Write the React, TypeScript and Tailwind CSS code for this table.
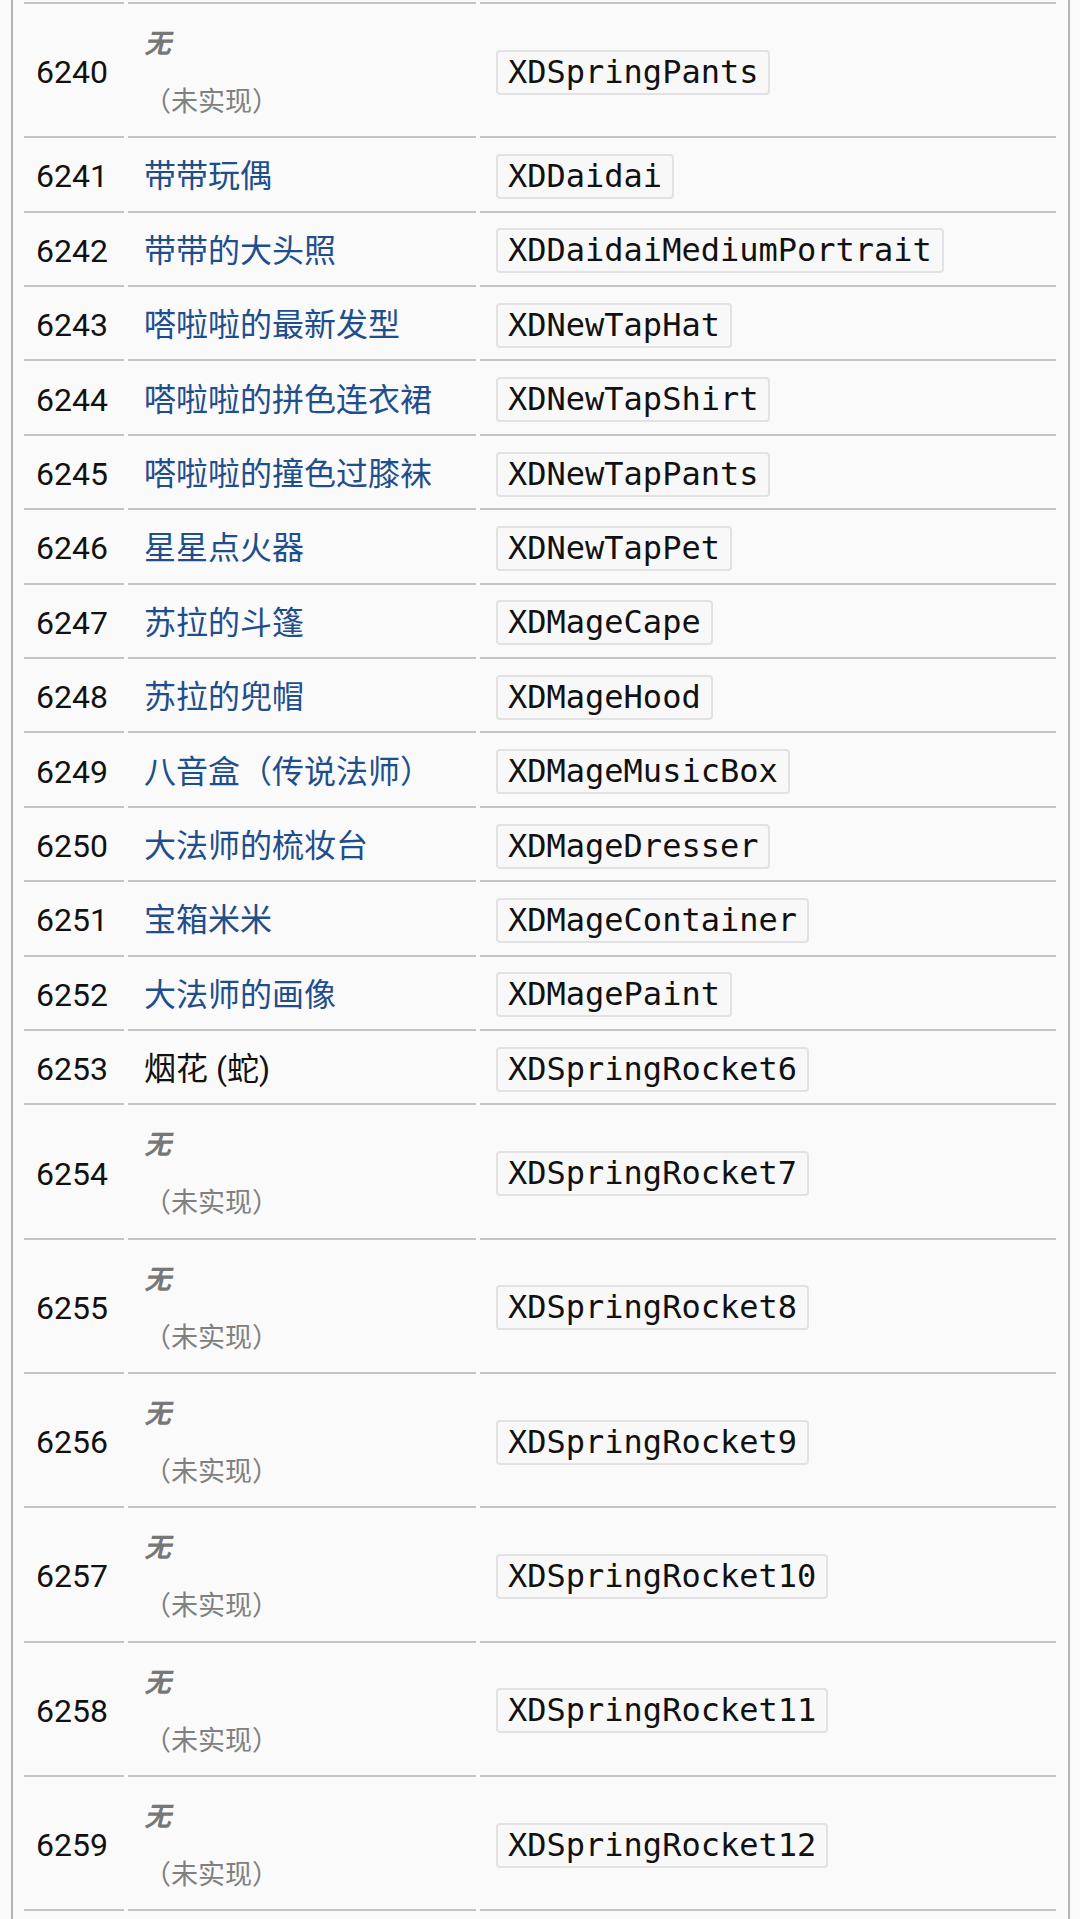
type Row = {
  id: number;
  name?: string;
  link?: boolean;
  code: string;
};

const rows: Row[] = [
  { id: 6240, code: "XDSpringPants" },
  { id: 6241, name: "带带玩偶", link: true, code: "XDDaidai" },
  { id: 6242, name: "带带的大头照", link: true, code: "XDDaidaiMediumPortrait" },
  { id: 6243, name: "嗒啦啦的最新发型", link: true, code: "XDNewTapHat" },
  { id: 6244, name: "嗒啦啦的拼色连衣裙", link: true, code: "XDNewTapShirt" },
  { id: 6245, name: "嗒啦啦的撞色过膝袜", link: true, code: "XDNewTapPants" },
  { id: 6246, name: "星星点火器", link: true, code: "XDNewTapPet" },
  { id: 6247, name: "苏拉的斗篷", link: true, code: "XDMageCape" },
  { id: 6248, name: "苏拉的兜帽", link: true, code: "XDMageHood" },
  { id: 6249, name: "八音盒（传说法师）", link: true, code: "XDMageMusicBox" },
  { id: 6250, name: "大法师的梳妆台", link: true, code: "XDMageDresser" },
  { id: 6251, name: "宝箱米米", link: true, code: "XDMageContainer" },
  { id: 6252, name: "大法师的画像", link: true, code: "XDMagePaint" },
  { id: 6253, name: "烟花 (蛇)", code: "XDSpringRocket6" },
  { id: 6254, code: "XDSpringRocket7" },
  { id: 6255, code: "XDSpringRocket8" },
  { id: 6256, code: "XDSpringRocket9" },
  { id: 6257, code: "XDSpringRocket10" },
  { id: 6258, code: "XDSpringRocket11" },
  { id: 6259, code: "XDSpringRocket12" },
];

const cell = "border-b-2 border-[#c4c4c4] flex items-center";

const Missing = () => (
  <div className="flex flex-col self-stretch pt-[14px] gap-[18px]">
    <i className="text-[27px] leading-[40px] font-bold text-[#777777] [font-family:'Noto_Sans_CJK_SC',sans-serif]">
      无
    </i>
    <span className="text-[27px] leading-[40px] text-[#808080] [font-family:'Noto_Sans_CJK_SC',sans-serif]">
      （未实现）
    </span>
  </div>
);

const TableRow = ({ row }: { row: Row }) => {
  const tall = !row.name;
  const h = tall ? "h-[130.3px]" : "h-[70.4px]";
  return (
    <div className="grid grid-cols-[100px_348px_576px] gap-x-[4px] pt-[4px]">
      <div className={`${cell} ${h} pl-[12px]`}>
        <span className="text-[32px] text-[#111] [font-family:Roboto,sans-serif]">
          {row.id}
        </span>
      </div>
      <div className={`${cell} ${h} pl-[16px]`}>
        {tall ? (
          <Missing />
        ) : (
          <span
            className={`text-[32px] [font-family:Roboto,'Noto_Sans_CJK_SC',sans-serif] ${
              row.link ? "text-[#1f4e8c]" : "text-[#111]"
            }`}
          >
            {row.name}
          </span>
        )}
      </div>
      <div className={`${cell} ${h} pl-[16px]`}>
        <code className="px-[10px] border-2 border-[#e2e2e2] rounded-[4px] bg-[#f8f8f8] text-[32px] leading-[41px] text-[#111] [font-family:'DejaVu_Sans_Mono',monospace]">
          {row.code}
        </code>
      </div>
    </div>
  );
};

export default function App() {
  return (
    <div className="h-[1919px] overflow-hidden bg-[#fafafa]">
      <div className="ml-[11px] mr-[10px] min-h-[1919px] border-x-2 border-[#b4b4b4] pl-[11px] pr-[12px]">
        <div className="grid grid-cols-[100px_348px_576px] gap-x-[4px]">
          <div className="h-[4px] border-b-2 border-[#c4c4c4]" />
          <div className="h-[4px] border-b-2 border-[#c4c4c4]" />
          <div className="h-[4px] border-b-2 border-[#c4c4c4]" />
        </div>
        {rows.map((r) => (
          <TableRow key={r.id} row={r} />
        ))}
        <div className="grid grid-cols-[100px_348px_576px] gap-x-[4px] pt-[4px]">
          <div className="h-[70px]" />
        </div>
      </div>
    </div>
  );
}
